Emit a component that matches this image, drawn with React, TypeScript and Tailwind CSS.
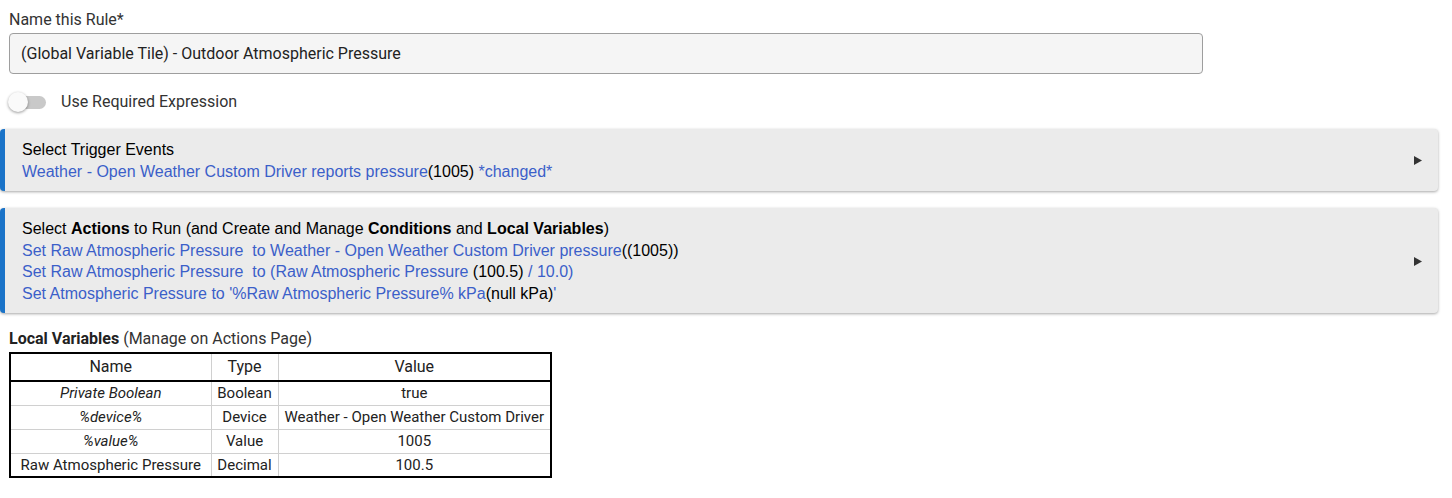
import React from 'react';

const blue = 'text-[#3b5fc9]';

function Arrow() {
  return (
    <svg className="w-[8px] h-[9px]" viewBox="0 0 8 9">
      <path d="M0 0 L8 4.5 L0 9 Z" fill="#333" />
    </svg>
  );
}

function Card({ children }: { children: React.ReactNode }) {
  return (
    <div className="flex items-center mr-[14px] bg-[#ebebeb] border-l-[5px] border-[#1a73c8] rounded-[4px] shadow-[0_1px_3px_rgba(0,0,0,0.35)] pl-[17px] pr-[16px] pt-[10px] pb-[9px] font-['Liberation_Sans',Arial,sans-serif] text-[16px] leading-[21.5px] text-black">
      <div className="flex-1">{children}</div>
      <Arrow />
    </div>
  );
}

const rows = [
  { name: 'Private Boolean', italic: true, type: 'Boolean', value: 'true' },
  { name: '%device%', italic: true, type: 'Device', value: 'Weather - Open Weather Custom Driver' },
  { name: '%value%', italic: true, type: 'Value', value: '1005' },
  { name: 'Raw Atmospheric Pressure', italic: false, type: 'Decimal', value: '100.5' },
];

export default function App() {
  return (
    <div className="w-[1452px] h-[498px] bg-white font-['Roboto',sans-serif] text-[#333] overflow-hidden">
      <div className="px-[9px] pt-[9px]">
        <div className="text-[16px] leading-[22px]">Name this Rule*</div>
        <div className="mt-[2px] w-[1194px] h-[41px] flex items-center px-[11px] bg-[#f5f5f5] border border-[#9e9e9e] rounded-[4px] text-[16px] text-[#222]">
          (Global Variable Tile) - Outdoor Atmospheric Pressure
        </div>
        <div className="flex items-center mt-[17px] h-[22px]">
          <div className="relative w-[38px] h-[20px] flex items-center">
            <div className="ml-[3px] w-[34px] h-[13px] rounded-full bg-[#c9c9c9]" />
            <div className="absolute left-[-1px] top-0 w-[20px] h-[20px] rounded-full bg-[#fafafa] shadow-[0_1px_3px_rgba(0,0,0,0.4)]" />
          </div>
          <span className="ml-[14px] text-[16px]">Use Required Expression</span>
        </div>
      </div>

      <div className="mt-[16px] flex flex-col gap-[17px]">
        <Card>
          <div>Select Trigger Events</div>
          <div>
            <span className={blue}>Weather - Open Weather Custom Driver reports pressure</span>
            (1005)
            <span className={blue}> *changed*</span>
          </div>
        </Card>
        <Card>
          <div>
            Select <b>Actions</b> to Run (and Create and Manage <b>Conditions</b> and <b>Local Variables</b>)
          </div>
          <div>
            <span className={blue}>Set Raw Atmospheric Pressure &nbsp;to Weather - Open Weather Custom Driver pressure</span>
            ((1005))
          </div>
          <div>
            <span className={blue}>Set Raw Atmospheric Pressure &nbsp;to (Raw Atmospheric Pressure </span>
            (100.5)
            <span className={blue}> / 10.0)</span>
          </div>
          <div>
            <span className={blue}>Set Atmospheric Pressure to '%Raw Atmospheric Pressure% kPa</span>
            (null kPa)
            <span className={blue}>'</span>
          </div>
        </Card>
      </div>

      <div className="px-[9px] mt-[16px]">
        <div className="text-[16px] leading-[20px]">
          <b className="font-bold text-[#222]">Local Variables</b> (Manage on Actions Page)
        </div>
        <table className="mt-[3px] border-collapse border-2 border-black text-[#222]">
          <thead>
            <tr className="border-b-2 border-black h-[28px] text-[16px]">
              <th className="w-[201px] font-normal border-r border-[#d0d0d0]">Name</th>
              <th className="w-[67px] font-normal border-r border-[#d0d0d0]">Type</th>
              <th className="w-[273px] font-normal">Value</th>
            </tr>
          </thead>
          <tbody className="text-[15px] leading-[20px]">
            {rows.map((r, i) => (
              <tr key={r.name} className={`h-[24px] ${i < rows.length - 1 ? 'border-b border-[#d0d0d0]' : ''}`}>
                <td className={`text-center border-r border-[#d0d0d0] ${r.italic ? 'italic' : ''}`}>{r.name}</td>
                <td className="text-center border-r border-[#d0d0d0]">{r.type}</td>
                <td className="text-center">{r.value}</td>
              </tr>
            ))}
          </tbody>
        </table>
      </div>
    </div>
  );
}
